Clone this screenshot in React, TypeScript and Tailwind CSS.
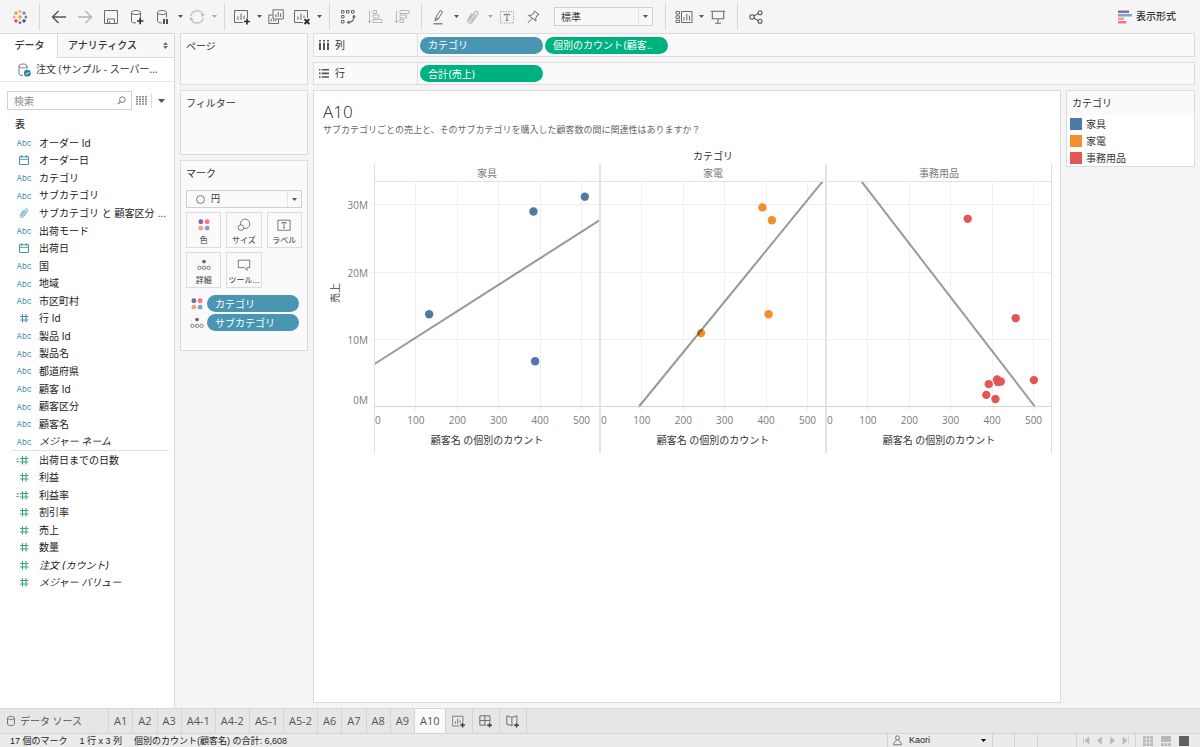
import React, { useState } from "react";

type Children = { children: React.ReactNode };

/* ---------- Icons ---------- */

function Icon({
  size = 16,
  className = "text-[#6b6b6b]",
  children,
}: Children & { size?: number; className?: string }) {
  return (
    <svg
      width={size}
      height={size}
      viewBox="0 0 16 16"
      fill="none"
      stroke="currentColor"
      className={`shrink-0 ${className}`}
      aria-hidden="true"
    >
      {children}
    </svg>
  );
}

function Cross({ x, y, r, color }: { x: number; y: number; r: number; color: string }) {
  return <path d={`M${x - r} ${y}H${x + r}M${x} ${y - r}V${y + r}`} stroke={color} strokeWidth="1.2" />;
}

function LogoIcon() {
  return (
    <Icon>
      <Cross x={8} y={8} r={2.4} color="#eb912b" />
      <Cross x={4} y={4.2} r={1.9} color="#eb912b" />
      <Cross x={12} y={4.2} r={1.9} color="#59879b" />
      <Cross x={4} y={11.8} r={1.9} color="#e8334a" />
      <Cross x={12} y={11.8} r={1.9} color="#1f457e" />
      <Cross x={8} y={2.4} r={1.4} color="#f0a05a" />
      <Cross x={8} y={13.6} r={1.4} color="#5b6591" />
      <Cross x={2.2} y={8} r={1.4} color="#d98ca0" />
      <Cross x={13.8} y={8} r={1.4} color="#5b6591" />
    </Icon>
  );
}

const ArrowIcon = ({ forward = false }: { forward?: boolean }) => (
  <Icon className={forward ? "text-[#b4b4b4]" : "text-[#555555]"}>
    {forward ? (
      <path d="M1 8H14.5M8.5 2L14.5 8L8.5 14" strokeWidth="1.4" />
    ) : (
      <path d="M15 8H1.5M7.5 2L1.5 8L7.5 14" strokeWidth="1.4" />
    )}
  </Icon>
);

const SaveIcon = () => (
  <Icon>
    <path d="M1.5 1.5H14.5V14.5H1.5ZM4.5 14V10H11.5V14M6.5 12V14" />
  </Icon>
);

const CylinderPath = () => (
  <path d="M2.5 3.5V12.2C2.5 13.3 4.2 14 7 14M2.5 3.5C2.5 2.3 4.5 1.5 7 1.5S11.5 2.3 11.5 3.5S9.5 5.5 7 5.5S2.5 4.7 2.5 3.5ZM11.5 3.5V8.5" />
);

const DbAddIcon = () => (
  <Icon>
    <CylinderPath />
    <path d="M8 12H14.4M11.2 8.8V15.2" stroke="#333" strokeWidth="1.7" />
  </Icon>
);

const DbPauseIcon = () => (
  <Icon>
    <CylinderPath />
    <path d="M9 10V15M12 10V15" stroke="#333" strokeWidth="1.7" />
  </Icon>
);

const RefreshIcon = () => (
  <Icon className="text-[#b8b8b8]">
    <path d="M1.8 7.2A6.3 6.3 0 0 1 13.7 5.4M14.2 8.8A6.3 6.3 0 0 1 2.3 10.6" strokeWidth="1.1" />
    <path d="M11.6 5H15.6L13.8 8ZM.4 11H4.4L2.2 8Z" fill="currentColor" stroke="none" />
  </Icon>
);

const NewSheetIcon = ({ size = 16 }: { size?: number }) => (
  <Icon size={size}>
    <path d="M9 13.5H.5V1.5H13.5V9M4 11V7.5M7 11V4.5M10 10V6.5" />
    <path d="M10 12.5H16M13 9.5V15.5" stroke="#333" strokeWidth="1.7" />
  </Icon>
);

const DuplicateIcon = () => (
  <Icon>
    <path d="M5 .8H15.3V10H5ZM7.8 8V5.2M10.2 8V3M12.6 8V4.4" />
    <path d="M4.8 6H.8V14.5H10.5V10.2M3.2 12.5V9.8M5.6 12.5V11M7.8 12.5V11" />
  </Icon>
);

const ClearIcon = () => (
  <Icon>
    <path d="M9 13.5H.5V1.5H13.5V9M4 11V7.5M7 11V4.5M10 9V6.5" />
    <path d="M10.5 10.2L15.3 15M15.3 10.2L10.5 15" stroke="#222" strokeWidth="1.8" />
  </Icon>
);

const SwapIcon = () => (
  <Icon>
    <path d="M1.5 1.5H4V4H1.5ZM6.5 1.5H9V4H6.5ZM11.5 1.5H14V4H11.5ZM1.5 6.5H4V9H1.5ZM1.5 11.5H4V14H1.5Z" />
    <path d="M14 7.5C14 11 12 13.2 8.5 13.4" strokeWidth="1.2" />
    <path d="M14 5.2L16 8.4H12ZM6.5 13.4L9.5 11.2V15.6Z" fill="currentColor" stroke="none" />
  </Icon>
);

const SortIcon = ({ descending = false }: { descending?: boolean }) => (
  <Icon className="text-[#b8b8b8]">
    <path d="M2.5 1.5V13.5M.7 11.5L2.5 13.7L4.3 11.5" />
    {descending ? (
      <path d="M6 1.5H15V4.5H6ZM6 6H12.5V9H6ZM6 10.5H9.5V13.5H6Z" />
    ) : (
      <path d="M6 1.5H9.5V4.5H6ZM6 6H12V9H6ZM6 10.5H15V13.5H6Z" />
    )}
  </Icon>
);

const HighlighterIcon = () => (
  <Icon>
    <path d="M2.5 14.8H11.5" strokeWidth="1.2" />
    <path d="M4 11.8L4.6 8.6L9.3 1.4L11.6 2.9L7 10.2L4 11.8ZM5 8.8L7 10" />
  </Icon>
);

const ClipIcon = ({ size = 16, className = "text-[#b0b0b0]" }: { size?: number; className?: string }) => (
  <Icon size={size} className={className}>
    <path
      d="M10.8 5.2L6.6 11.2C5.8 12.4 4.2 11.3 5 10.1L9.8 3.2C11.2 1.2 14.1 3.1 12.7 5.2L7.4 12.9C5.4 15.7 1.3 13 3.3 10.1L7.2 4.4"
      strokeWidth="1.1"
    />
  </Icon>
);

const LabelIcon = () => (
  <Icon>
    <rect x="1.5" y="2.5" width="13" height="11.5" strokeDasharray="1.5 1" stroke="#a8a8a8" />
    <path d="M5.3 6.6V5.3H10.7V6.6M8 5.3V11.4M6.6 11.4H9.4" stroke="#777" />
  </Icon>
);

const PinIcon = () => (
  <Icon>
    <path d="M9.5 2L14 5.7L12.2 6.2L10.6 9.3L11 12L3.6 6.4L6.2 6.2L9 4ZM7 9.3L2.8 14" />
  </Icon>
);

const ShowCardsIcon = () => (
  <svg width="18" height="14" viewBox="0 0 18 14" fill="none" stroke="#6b6b6b" aria-hidden="true">
    <path d="M1 1.5H4.5V4H1ZM1 5.8H4.5V8.3H1ZM1 10.2H4.5V12.5H1ZM6.5 1.5H17V12.5H6.5ZM9 10.5V7M11.8 10.5V4M14.5 10.5V5.5" />
  </svg>
);

const PresentIcon = () => (
  <Icon>
    <path d="M.8 2.3H15.2M2.3 2.3V9.7H13.7V2.3M8 9.7V14.3M5 14.3H11" strokeWidth="1.1" />
  </Icon>
);

const ShareIcon = () => (
  <Icon>
    <path d="M5.9 7L10.2 4.4M5.9 9L10.2 11.6" stroke="#555" strokeWidth="1.1" />
    <circle cx="4" cy="8" r="2.2" stroke="#555" strokeWidth="1.1" />
    <circle cx="12" cy="3.7" r="2" stroke="#555" strokeWidth="1.1" />
    <circle cx="12" cy="12.3" r="2" stroke="#555" strokeWidth="1.1" />
  </Icon>
);

function Caret({ className = "text-[#555555]", wide = false }: { className?: string; wide?: boolean }) {
  return (
    <svg
      width={wide ? 7 : 5}
      height={wide ? 4 : 3}
      viewBox="0 0 8 4"
      preserveAspectRatio="none"
      className={`shrink-0 ${className}`}
      aria-hidden="true"
    >
      <path d="M0 0H8L4 4Z" fill="currentColor" />
    </svg>
  );
}

const ColorIcon = ({ size = 14 }: { size?: number }) => (
  <Icon size={size}>
    <g stroke="none">
      <circle cx="4.4" cy="4.2" r="2.8" fill="#83699a" />
      <circle cx="11.6" cy="4.2" r="2.8" fill="#fc7283" />
      <circle cx="4.4" cy="11.6" r="2.8" fill="#f3a578" />
      <circle cx="11.6" cy="11.6" r="2.8" fill="#7fa3cf" />
    </g>
  </Icon>
);

const DetailIcon = () => (
  <Icon size={14}>
    <circle cx="8" cy="4" r="2.1" fill="#666" stroke="none" />
    <circle cx="2.8" cy="11.2" r="1.9" />
    <circle cx="8" cy="11.2" r="1.9" />
    <circle cx="13.2" cy="11.2" r="1.9" />
  </Icon>
);

const SizeIcon = () => (
  <Icon size={14}>
    <circle cx="9.2" cy="6.7" r="5.4" />
    <circle cx="4.5" cy="11" r="3.2" fill="#fafafa" />
  </Icon>
);

const TextMarkIcon = () => (
  <Icon size={14}>
    <path d="M1 2.5H15V14H1Z" />
    <path d="M5.5 6.5V5.2H10.5V6.5M8 5.2V11.3M6.8 11.3H9.2" />
  </Icon>
);

const TooltipIcon = () => (
  <Icon size={14}>
    <path d="M1.5 2.5H14.5V11H11.5V14L8.5 11H1.5Z" />
  </Icon>
);

const CalendarIcon = () => (
  <Icon size={12} className="text-[#4a90ac]">
    <path d="M2 3.5H14V14H2ZM2 7H14M5 1.5V5M11 1.5V5" strokeWidth="1.3" />
  </Icon>
);

/* ---------- Toolbar ---------- */

function ToolButton({ label, children }: Children & { label: string }) {
  return (
    <button type="button" aria-label={label} className="flex h-full w-[26px] items-center justify-center">
      {children}
    </button>
  );
}

function MenuButton({ label, muted = false }: { label: string; muted?: boolean }) {
  return (
    <button type="button" aria-label={label} className="flex h-full w-2 items-center justify-center">
      <Caret className={muted ? "text-[#aaaaaa]" : "text-[#555555]"} />
    </button>
  );
}

function Group({ className, children }: Children & { className: string }) {
  return <div className={`my-[3px] flex items-center border-r border-[#d8d8d8] ${className}`}>{children}</div>;
}

function Toolbar() {
  return (
    <header className="flex h-[33px] shrink-0">
      <Group className="w-10 justify-center">
        <LogoIcon />
      </Group>
      <Group className="pr-1.5 pl-1.5">
        <ToolButton label="元に戻す"><ArrowIcon /></ToolButton>
        <ToolButton label="やり直し"><ArrowIcon forward /></ToolButton>
        <ToolButton label="保存"><SaveIcon /></ToolButton>
        <ToolButton label="新しいデータ ソース"><DbAddIcon /></ToolButton>
        <ToolButton label="自動更新の一時停止"><DbPauseIcon /></ToolButton>
        <MenuButton label="自動更新メニュー" />
        <ToolButton label="更新の実行"><RefreshIcon /></ToolButton>
        <MenuButton label="更新メニュー" muted />
      </Group>
      <Group className="pr-1.5 pl-1">
        <ToolButton label="新しいワークシート"><NewSheetIcon /></ToolButton>
        <MenuButton label="ワークシート メニュー" />
        <ToolButton label="複製"><DuplicateIcon /></ToolButton>
        <ToolButton label="シートのクリア"><ClearIcon /></ToolButton>
        <MenuButton label="クリア メニュー" />
      </Group>
      <Group className="gap-px pr-1.5 pl-[5px]">
        <ToolButton label="スワップ"><SwapIcon /></ToolButton>
        <ToolButton label="昇順"><SortIcon /></ToolButton>
        <ToolButton label="降順"><SortIcon descending /></ToolButton>
      </Group>
      <Group className="pr-3 pl-1">
        <ToolButton label="ハイライト"><HighlighterIcon /></ToolButton>
        <MenuButton label="ハイライト メニュー" />
        <ToolButton label="グループ"><ClipIcon /></ToolButton>
        <MenuButton label="グループ メニュー" muted />
        <ToolButton label="ラベルの表示"><LabelIcon /></ToolButton>
        <ToolButton label="軸の固定"><PinIcon /></ToolButton>
        <div className="relative ml-2 flex">
          <select
            aria-label="適合"
            className="h-[19px] w-[99px] appearance-none border border-[#d0d0d0] bg-[#f8f8f8] pl-1.5 text-[10px] leading-4 text-[#333333]"
          >
            <option>標準</option>
          </select>
          <span className="pointer-events-none absolute inset-y-px right-px flex w-[14px] items-center justify-center border-l border-[#e4e4e4]">
            <Caret />
          </span>
        </div>
      </Group>
      <Group className="pr-1.5 pl-[5px]">
        <ToolButton label="カードの表示"><ShowCardsIcon /></ToolButton>
        <MenuButton label="カード メニュー" />
        <ToolButton label="プレゼンテーション モード"><PresentIcon /></ToolButton>
      </Group>
      <div className="flex items-center pl-[5px]">
        <ToolButton label="共有"><ShareIcon /></ToolButton>
      </div>
      <button type="button" className="mr-6 ml-auto flex items-center gap-1 text-[10px] font-medium text-[#333333]">
        <svg width="14" height="14" viewBox="0 0 14 14" aria-hidden="true">
          <path d="M0 .5H11V3H0Z" fill="#8a6d96" />
          <path d="M0 4H14V6.5H0Z" fill="#7fa3cf" />
          <path d="M0 7.5H6V10H0Z" fill="#f3a578" />
          <path d="M0 11H8.5V13.5H0Z" fill="#fc7283" />
        </svg>
        表示形式
      </button>
    </header>
  );
}

/* ---------- Data pane ---------- */

type FieldKind = "text" | "date" | "group" | "number" | "calc";
type Field = { name: string; kind: FieldKind; italic?: boolean };

const dimensions: Field[] = [
  { name: "オーダー Id", kind: "text" },
  { name: "オーダー日", kind: "date" },
  { name: "カテゴリ", kind: "text" },
  { name: "サブカテゴリ", kind: "text" },
  { name: "サブカテゴリ と 顧客区分 ...", kind: "group" },
  { name: "出荷モード", kind: "text" },
  { name: "出荷日", kind: "date" },
  { name: "国", kind: "text" },
  { name: "地域", kind: "text" },
  { name: "市区町村", kind: "text" },
  { name: "行 Id", kind: "number" },
  { name: "製品 Id", kind: "text" },
  { name: "製品名", kind: "text" },
  { name: "都道府県", kind: "text" },
  { name: "顧客 Id", kind: "text" },
  { name: "顧客区分", kind: "text" },
  { name: "顧客名", kind: "text" },
  { name: "メジャー ネーム", kind: "text", italic: true },
];

const measures: Field[] = [
  { name: "出荷日までの日数", kind: "calc" },
  { name: "利益", kind: "number" },
  { name: "利益率", kind: "calc" },
  { name: "割引率", kind: "number" },
  { name: "売上", kind: "number" },
  { name: "数量", kind: "number" },
  { name: "注文 (カウント)", kind: "number", italic: true },
  { name: "メジャー バリュー", kind: "number", italic: true },
];

function FieldIcon({ kind, measure }: { kind: FieldKind; measure: boolean }) {
  const color = measure ? "text-[#3fa67c]" : "text-[#4a90ac]";
  if (kind === "text") return <span className="pt-px text-[8px] text-[#4a90ac]">Abc</span>;
  if (kind === "date") return <CalendarIcon />;
  if (kind === "group") return <ClipIcon size={12} className="text-[#4a90ac]" />;
  return (
    <svg width="18" height="10" viewBox="0 0 18 10" fill="none" stroke="currentColor" className={color} aria-hidden="true">
      <path d="M7.5 1V9.5M11 1V9.5M5 3.5H13.5M5 7H13.5" strokeWidth="1.1" />
      {kind === "calc" && <path d="M1.5 4H3.8M1.5 6.5H3.8" strokeWidth="1.1" />}
    </svg>
  );
}

function FieldRows({ fields, measure = false }: { fields: Field[]; measure?: boolean }) {
  return (
    <>
      {fields.map((f) => (
        <li key={f.name} className="flex items-center">
          <span className="flex w-6 shrink-0 justify-center">
            <FieldIcon kind={f.kind} measure={measure} />
          </span>
          <span className={`ml-[3px] text-[10px] leading-4 whitespace-nowrap text-[#222222] ${f.italic ? "italic" : ""}`}>
            {f.name}
          </span>
        </li>
      ))}
    </>
  );
}

function DataPane() {
  return (
    <aside className="flex w-[175px] shrink-0 flex-col border-t border-r border-[#d8d8d8] bg-white">
      <div role="tablist" className="flex h-6 shrink-0 text-[10px] font-medium text-[#333333]">
        <button type="button" role="tab" aria-selected="true" className="w-[57px] pb-0.5 pl-0.5">
          データ
        </button>
        <button
          type="button"
          role="tab"
          aria-selected="false"
          className="flex flex-1 items-center justify-between border-b border-l border-[#dcdcdc] bg-[#f8f8f8] pr-1.5 pb-px pl-2.5"
        >
          アナリティクス
          <svg width="5" height="7" viewBox="0 0 5 7" fill="#5f6f7c" aria-hidden="true">
            <path d="M0 3L2.5 0L5 3ZM0 4L2.5 7L5 4Z" />
          </svg>
        </button>
      </div>
      <button
        type="button"
        className="flex h-6 shrink-0 items-center gap-[5px] border-b border-[#e6e6e6] pl-[18px] font-['Open_Sans','Noto_Sans_CJK_JP',sans-serif] text-[10px] whitespace-nowrap text-[#333333]"
      >
        <svg width="13" height="14" viewBox="0 0 13 14" fill="none" stroke="#777" aria-hidden="true">
          <path d="M1 3C1 1.8 2.8 1 5 1S9 1.8 9 3S7.2 5 5 5S1 4.2 1 3ZM1 3V10.5C1 11.8 2.5 12.5 5 12.5M9 3V6" />
          <circle cx="9.3" cy="10.2" r="3.4" fill="#2d7fa3" stroke="none" />
          <path d="M7.7 10.2L8.9 11.4L11 9.1" stroke="#fff" />
        </svg>
        注文 (サンプル - スーパー...
      </button>
      <div className="mt-[9px] flex shrink-0 items-center pl-[7px]">
        <label className="flex h-[19px] w-[125px] items-center border border-[#d0d0d0] bg-white pr-[5px] pl-1.5">
          <input
            type="search"
            aria-label="検索"
            placeholder="検索"
            className="w-full min-w-0 text-[10px] leading-4 outline-none placeholder:text-[#8c8c8c]"
          />
          <Icon size={9}>
            <circle cx="9.5" cy="6.5" r="5" strokeWidth="1.6" />
            <path d="M6 10L1.5 14.5" strokeWidth="1.8" />
          </Icon>
        </label>
        <button type="button" aria-label="表示の切り替え" className="ml-1 flex h-[15px] items-center border-r border-[#dcdcdc] pr-1">
          <svg width="11" height="9" viewBox="0 0 11 9" fill="#888" aria-hidden="true">
            {[0, 2.4, 4.8, 7.2].map((y) => (
              <path key={y} d={`M0 ${y}h2v1.5h-2zM3 ${y}h2v1.5h-2zM6 ${y}h2v1.5h-2zM9 ${y}h2v1.5h-2z`} />
            ))}
          </svg>
        </button>
        <button type="button" aria-label="データ ペインのメニュー" className="flex h-[15px] items-center pl-1.5">
          <Caret wide />
        </button>
      </div>
      <h2 className="mt-1.5 ml-[15px] h-[17px] shrink-0 text-[10px] leading-[17px] font-medium text-[#333333]">表</h2>
      <ul className="mt-px mr-[5px] ml-3 grid h-[317px] shrink-0 auto-rows-fr border-b border-[#e0e0e0]">
        <FieldRows fields={dimensions} />
      </ul>
      <ul className="mr-[5px] ml-3 grid h-[140px] shrink-0 auto-rows-fr">
        <FieldRows fields={measures} measure />
      </ul>
    </aside>
  );
}

/* ---------- Cards ---------- */

function Card({ title, className, children }: { title: string; className: string; children?: React.ReactNode }) {
  return (
    <section className={`border border-[#dcdcdc] bg-[#fafafa] ${className}`}>
      <h2 className="pt-1 pl-[5px] text-[10px] leading-4 text-[#333333]">{title}</h2>
      {children}
    </section>
  );
}

const markButtons = [
  { label: "色", icon: <ColorIcon /> },
  { label: "サイズ", icon: <SizeIcon /> },
  { label: "ラベル", icon: <TextMarkIcon /> },
  { label: "詳細", icon: <DetailIcon /> },
  { label: "ツール...", icon: <TooltipIcon /> },
];

function Pill({ className, children }: Children & { className: string }) {
  return (
    <button
      type="button"
      className={`flex h-[17px] items-center rounded-full pl-2 text-[10px] leading-4 whitespace-nowrap text-white ${className}`}
    >
      {children}
    </button>
  );
}

function Cards() {
  return (
    <div className="flex w-32 shrink-0 flex-col gap-[5px]">
      <Card title="ページ" className="h-[52px]" />
      <Card title="フィルター" className="h-[65px]" />
      <Card title="マーク" className="pb-[19px]">
        <div className="relative mx-[5px] mt-[9px] flex">
          <select
            aria-label="マーク タイプ"
            className="h-[18px] w-full appearance-none border border-[#d0d0d0] bg-[#fafafa] pl-6 text-[9px] leading-4 text-[#333333]"
          >
            <option>円</option>
          </select>
          <span className="pointer-events-none absolute inset-y-0 left-2.5 flex items-center">
            <Icon size={9}>
              <circle cx="8" cy="8" r="7" strokeWidth="1.6" />
            </Icon>
          </span>
          <span className="pointer-events-none absolute inset-y-px right-px flex w-[14px] items-center justify-center border-l border-[#e4e4e4]">
            <Caret />
          </span>
        </div>
        <div className="mx-[5px] mt-1 grid grid-cols-3 gap-x-[5px] gap-y-1">
          {markButtons.map((m) => (
            <button
              key={m.label}
              type="button"
              className="flex h-9 flex-col items-center justify-between border border-[#dcdcdc] pt-[5px] pb-px text-[8px] leading-3 whitespace-nowrap text-[#333333]"
            >
              {m.icon}
              {m.label}
            </button>
          ))}
        </div>
        <ul className="mt-[7px] ml-[9px] flex flex-col gap-[2px]">
          <li className="flex items-center gap-[3px]">
            <ColorIcon />
            <Pill className="w-[92px] bg-[#4996b2]">カテゴリ</Pill>
          </li>
          <li className="flex items-center gap-[3px]">
            <DetailIcon />
            <Pill className="w-[92px] bg-[#4996b2]">サブカテゴリ</Pill>
          </li>
        </ul>
      </Card>
    </div>
  );
}

function Shelf({
  label,
  icon,
  className,
  children,
}: Children & { label: string; icon: React.ReactNode; className: string }) {
  return (
    <div className={`flex border border-[#dcdcdc] bg-[#fafafa] ${className}`}>
      <div className="flex w-[104px] shrink-0 items-center gap-1.5 border-r border-[#dcdcdc] pl-[5px] text-[10px] text-[#333333]">
        {icon}
        {label}
      </div>
      <div className="flex items-center gap-[2px] pl-[2px]">{children}</div>
    </div>
  );
}

/* ---------- Chart ---------- */

type Pane = { name: string; color: string; points: [number, number][]; trend: [number, number, number, number] };

const panes: Pane[] = [
  {
    name: "家具",
    color: "#4e79a7",
    points: [[508, 31.3], [384, 29.1], [132, 13.8], [388, 6.8]],
    trend: [0, 6.4, 544, 27.8],
  },
  {
    name: "家電",
    color: "#f28e2b",
    points: [[391, 29.7], [414, 27.8], [406, 13.8], [243, 11]],
    trend: [92, 0, 537, 33.6],
  },
  {
    name: "事務用品",
    color: "#e15759",
    points: [[341, 28], [457, 13.2], [501, 4], [412, 4.1], [392, 3.4], [414, 3.7], [421, 3.8], [386, 1.8], [408, 1.2]],
    trend: [84, 33.6, 504, 0],
  },
];

const LEFT = 51;
const PANE_W = 226;
const TOP = 35;
const BASE = 261;
const sx = (count: number) => count * 0.414 + 0.5;
const sy = (millions: number) => BASE - millions * 6.72;

function Chart() {
  return (
    <svg
      width="734"
      height="308"
      viewBox="0 0 734 308"
      className="mt-2.5 shrink-0 font-['Open_Sans','Noto_Sans_CJK_JP',sans-serif] text-[10px]"
      role="img"
      aria-label="カテゴリ別の売上と顧客数"
    >
      <text x={390} y={14} textAnchor="middle" fill="#333">カテゴリ</text>
      <text transform="translate(16 147) rotate(-90)" textAnchor="middle" fill="#444">売上</text>
      {[10, 20, 30].map((v) => (
        <text key={v} x={45} y={sy(v) + 4} textAnchor="end" fill="#7a7a7a">{v}M</text>
      ))}
      <text x={45} y={BASE - 3} textAnchor="end" fill="#7a7a7a">0M</text>
      {panes.map((p, i) => (
        <g key={p.name} transform={`translate(${LEFT + i * PANE_W} 0)`}>
          <g stroke="#f0f0f0">
            {[100, 200, 300, 400, 500].map((v) => (
              <path key={v} d={`M${Math.floor(sx(v)) + 0.5} ${TOP}V${BASE + 4}`} />
            ))}
            {[10, 20, 30].map((v) => (
              <path key={v} d={`M${i === 0 ? -4 : 0} ${Math.round(sy(v)) - 0.5}H${PANE_W}`} />
            ))}
          </g>
          {p.points.map(([x, y], n) => (
            <circle key={n} cx={sx(x)} cy={sy(y)} r="4.2" fill={p.color} />
          ))}
          <path
            d={`M${sx(p.trend[0])} ${sy(p.trend[1])}L${sx(p.trend[2])} ${sy(p.trend[3])}`}
            stroke="#000"
            strokeOpacity="0.4"
            strokeWidth="2"
          />
          <text x={113} y={31} textAnchor="middle" fill="#777">{p.name}</text>
          <text x={1} y={278} fill="#7a7a7a">0</text>
          {[100, 200, 300, 400, 500].map((v) => (
            <text key={v} x={sx(v)} y={278} textAnchor="middle" fill="#7a7a7a">{v}</text>
          ))}
          <text x={113} y={298} textAnchor="middle" fill="#333">顧客名 の個別のカウント</text>
        </g>
      ))}
      <path d={`M${LEFT} ${TOP + 0.5}H729`} stroke="#e2e2e2" />
      <path d={`M${LEFT} ${BASE - 0.5}H729`} stroke="#d4d4d4" />
      <path d="M51.5 18V307M728.5 18V307" stroke="#dedede" />
      <path d="M277 18V307M503 18V307" stroke="#e4e4e4" strokeWidth="2" />
    </svg>
  );
}

const legend = [
  { name: "家具", swatch: "bg-[#4e79a7]" },
  { name: "家電", swatch: "bg-[#f28e2b]" },
  { name: "事務用品", swatch: "bg-[#e15759]" },
];

function Workspace() {
  return (
    <div className="flex min-w-0 flex-1 flex-col gap-[5px]">
      <Shelf
        label="列"
        className="h-6"
        icon={
          <svg width="10" height="10" viewBox="0 0 10 10" fill="#555" aria-hidden="true">
            <path d="M0 0H2V1.5H0ZM0 2.7H2V10H0ZM4 0H6V1.5H4ZM4 2.7H6V10H4ZM8 0H10V1.5H8ZM8 2.7H10V10H8Z" />
          </svg>
        }
      >
        <Pill className="w-[123px] bg-[#4996b2]">カテゴリ</Pill>
        <Pill className="w-[123px] bg-[#00b180]">個別のカウント(顧客..</Pill>
      </Shelf>
      <Shelf
        label="行"
        className="h-[23px]"
        icon={
          <svg width="10" height="9" viewBox="0 0 10 9" fill="#555" aria-hidden="true">
            <path d="M0 0H1.5V1.6H0ZM2.7 0H10V1.6H2.7ZM0 3.6H1.5V5.2H0ZM2.7 3.6H10V5.2H2.7ZM0 7.2H1.5V8.8H0ZM2.7 7.2H10V8.8H2.7Z" />
          </svg>
        }
      >
        <Pill className="w-[123px] bg-[#00b180]">合計(売上)</Pill>
      </Shelf>
      <div className="flex min-h-0 flex-1 items-start gap-[5px]">
        <main className="flex min-w-0 flex-1 flex-col self-stretch overflow-hidden border border-[#dcdcdc] bg-white pl-[9px]">
          <h1 className="mt-[9px] font-['Open_Sans','Noto_Sans_CJK_JP',sans-serif] text-[17px] leading-6 font-light text-[#222222]">A10</h1>
          <p className="text-[9px] leading-3 text-[#666666]">
            サブカテゴリごとの売上と、そのサブカテゴリを購入した顧客数の間に関連性はありますか？
          </p>
          <Chart />
        </main>
        <section className="w-[129px] shrink-0 border border-[#dcdcdc] bg-white text-[10px] leading-4 text-[#333333]">
          <h2 className="bg-[#fafafa] py-1 pl-[5px]">カテゴリ</h2>
          <ul className="pl-[3px]">
            {legend.map((l) => (
              <li key={l.name} className="flex h-[17px] items-center gap-1">
                <span className={`size-3 ${l.swatch}`} />
                {l.name}
              </li>
            ))}
          </ul>
        </section>
      </div>
    </div>
  );
}

/* ---------- Bottom bars ---------- */

const sheets = ["A1", "A2", "A3", "A4-1", "A4-2", "A5-1", "A5-2", "A6", "A7", "A8", "A9", "A10"];

function SheetTabs() {
  const [active, setActive] = useState("A10");
  return (
    <nav className="flex h-[25px] shrink-0 border-t border-[#d8d8d8] bg-[#e6e6e6] text-[#555555]">
      <button type="button" className="flex w-[109px] items-center gap-[5px] border-r border-[#d4d4d4] pl-[7px] font-['Open_Sans','Noto_Sans_CJK_JP',sans-serif] text-[10px]">
        <svg width="8" height="10" viewBox="0 0 8 10" fill="none" stroke="#777" aria-hidden="true">
          <path d="M.5 2C.5 1.1 2 .5 4 .5S7.5 1.1 7.5 2S6 3.5 4 3.5S.5 2.9 .5 2ZM.5 2V8C.5 8.9 2 9.5 4 9.5S7.5 8.9 7.5 8V2" />
        </svg>
        データ ソース
      </button>
      {sheets.map((s) => (
        <button
          key={s}
          type="button"
          onClick={() => setActive(s)}
          className={`border-r border-[#d4d4d4] px-[5px] font-['Open_Sans',sans-serif] text-[11px] ${s === active ? "bg-[#fafafa]" : ""}`}
        >
          {s}
        </button>
      ))}
      <button type="button" aria-label="新しいワークシート" className="flex w-[27px] items-center justify-center border-r border-[#d4d4d4]">
        <NewSheetIcon size={13} />
      </button>
      <button type="button" aria-label="新しいダッシュボード" className="flex w-[27px] items-center justify-center border-r border-[#d4d4d4]">
        <Icon size={13}>
          <path d="M9 12.5H1V1H13.5V9M1 6.8H13.5M7.2 1V12.5" strokeWidth="1.2" />
          <path d="M10 12.5H16M13 9.5V15.5" stroke="#444" strokeWidth="1.8" />
        </Icon>
      </button>
      <button type="button" aria-label="新しいストーリー" className="flex w-[27px] items-center justify-center border-r border-[#d4d4d4]">
        <Icon size={13}>
          <path d="M9 11.5L7.2 13L1 11.5V1L7.2 3L13.5 1V9M7.2 3V13" strokeWidth="1.2" />
          <path d="M10 12.5H16M13 9.5V15.5" stroke="#444" strokeWidth="1.8" />
        </Icon>
      </button>
    </nav>
  );
}

const navIcons = [
  { label: "最初", d: "M1.5 1V8M7 1L3 4.5L7 8Z" },
  { label: "前へ", d: "M6.5 1L2.5 4.5L6.5 8Z" },
  { label: "次へ", d: "M2.5 1L6.5 4.5L2.5 8Z" },
  { label: "最後", d: "M7.5 1V8M2 1L6 4.5L2 8Z" },
];

function StatusBar() {
  return (
    <footer className="flex h-[14px] shrink-0 items-end justify-between overflow-hidden border-t border-[#d4d4d4] bg-[#ebebeb] font-['Liberation_Sans','Noto_Sans_CJK_JP',sans-serif] text-[9px] leading-[11px] text-[#222222]">
      <div className="flex gap-3 pl-2.5">
        <span>17 個のマーク</span>
        <span>1 行 x 3 列</span>
        <span>個別のカウント(顧客名) の合計: 6,608</span>
      </div>
      <div className="flex h-full items-center">
        <button type="button" className="flex h-full w-[106px] items-center border-x border-[#d4d4d4] pr-1.5 pl-[5px]">
          <svg width="9" height="11" viewBox="0 0 9 11" fill="none" stroke="#777" aria-hidden="true">
            <circle cx="4.5" cy="2.8" r="2" />
            <path d="M3.3 4.8L2.8 6.2C1.3 6.6.7 7.7.7 9.8H8.3C8.3 7.7 7.7 6.6 6.2 6.2L5.7 4.8" />
          </svg>
          <span className="mr-auto ml-[7px]">Kaori</span>
          <Caret className="text-black" />
        </button>
        <span className="h-full w-[22px] border-r border-[#d4d4d4]" />
        <span className="h-full w-[23px] border-r border-[#d4d4d4]" />
        <span className="h-full w-[39px] border-r border-[#d4d4d4]" />
        <div className="flex h-full w-[59px] items-center gap-1 border-r border-[#d4d4d4] pl-[5px]">
          {navIcons.map((n) => (
            <button key={n.label} type="button" aria-label={n.label}>
              <svg width="9" height="9" viewBox="0 0 9 9" fill="#b8b8b8" stroke="#b8b8b8" strokeWidth="0.6" className="block" aria-hidden="true">
                <path d={n.d} />
              </svg>
            </button>
          ))}
        </div>
        <div className="flex w-16 items-center gap-2 pl-[7px]">
          <button type="button" aria-label="シート一覧">
            <svg width="10" height="10" viewBox="0 0 10 10" fill="#b8b8b8" className="block" aria-hidden="true">
              {[0, 3.6, 7.2].map((y) => (
                <path key={y} d={`M0 ${y}h2.8v2.8h-2.8zM3.6 ${y}h2.8v2.8h-2.8zM7.2 ${y}h2.8v2.8h-2.8z`} />
              ))}
            </svg>
          </button>
          <button type="button" aria-label="フィルムストリップ">
            <svg width="10" height="10" viewBox="0 0 10 10" fill="#b8b8b8" className="block" aria-hidden="true">
              <path d="M0 0H10V6H0ZM0 7.2H2.8V10H0ZM3.6 7.2H6.4V10H3.6ZM7.2 7.2H10V10H7.2Z" />
            </svg>
          </button>
          <button type="button" aria-label="タブ表示">
            <span className="block size-2.5 bg-[#606060]" />
          </button>
        </div>
      </div>
    </footer>
  );
}

export default function App() {
  return (
    <div className="flex h-screen flex-col overflow-hidden bg-[#f5f5f5] font-['Inter','Noto_Sans_CJK_JP',sans-serif]">
      <Toolbar />
      <div className="flex min-h-0 flex-1">
        <DataPane />
        <div className="flex min-w-0 flex-1 gap-[5px] pr-[5px] pb-[5px] pl-[5px]">
          <Cards />
          <Workspace />
        </div>
      </div>
      <SheetTabs />
      <StatusBar />
    </div>
  );
}
